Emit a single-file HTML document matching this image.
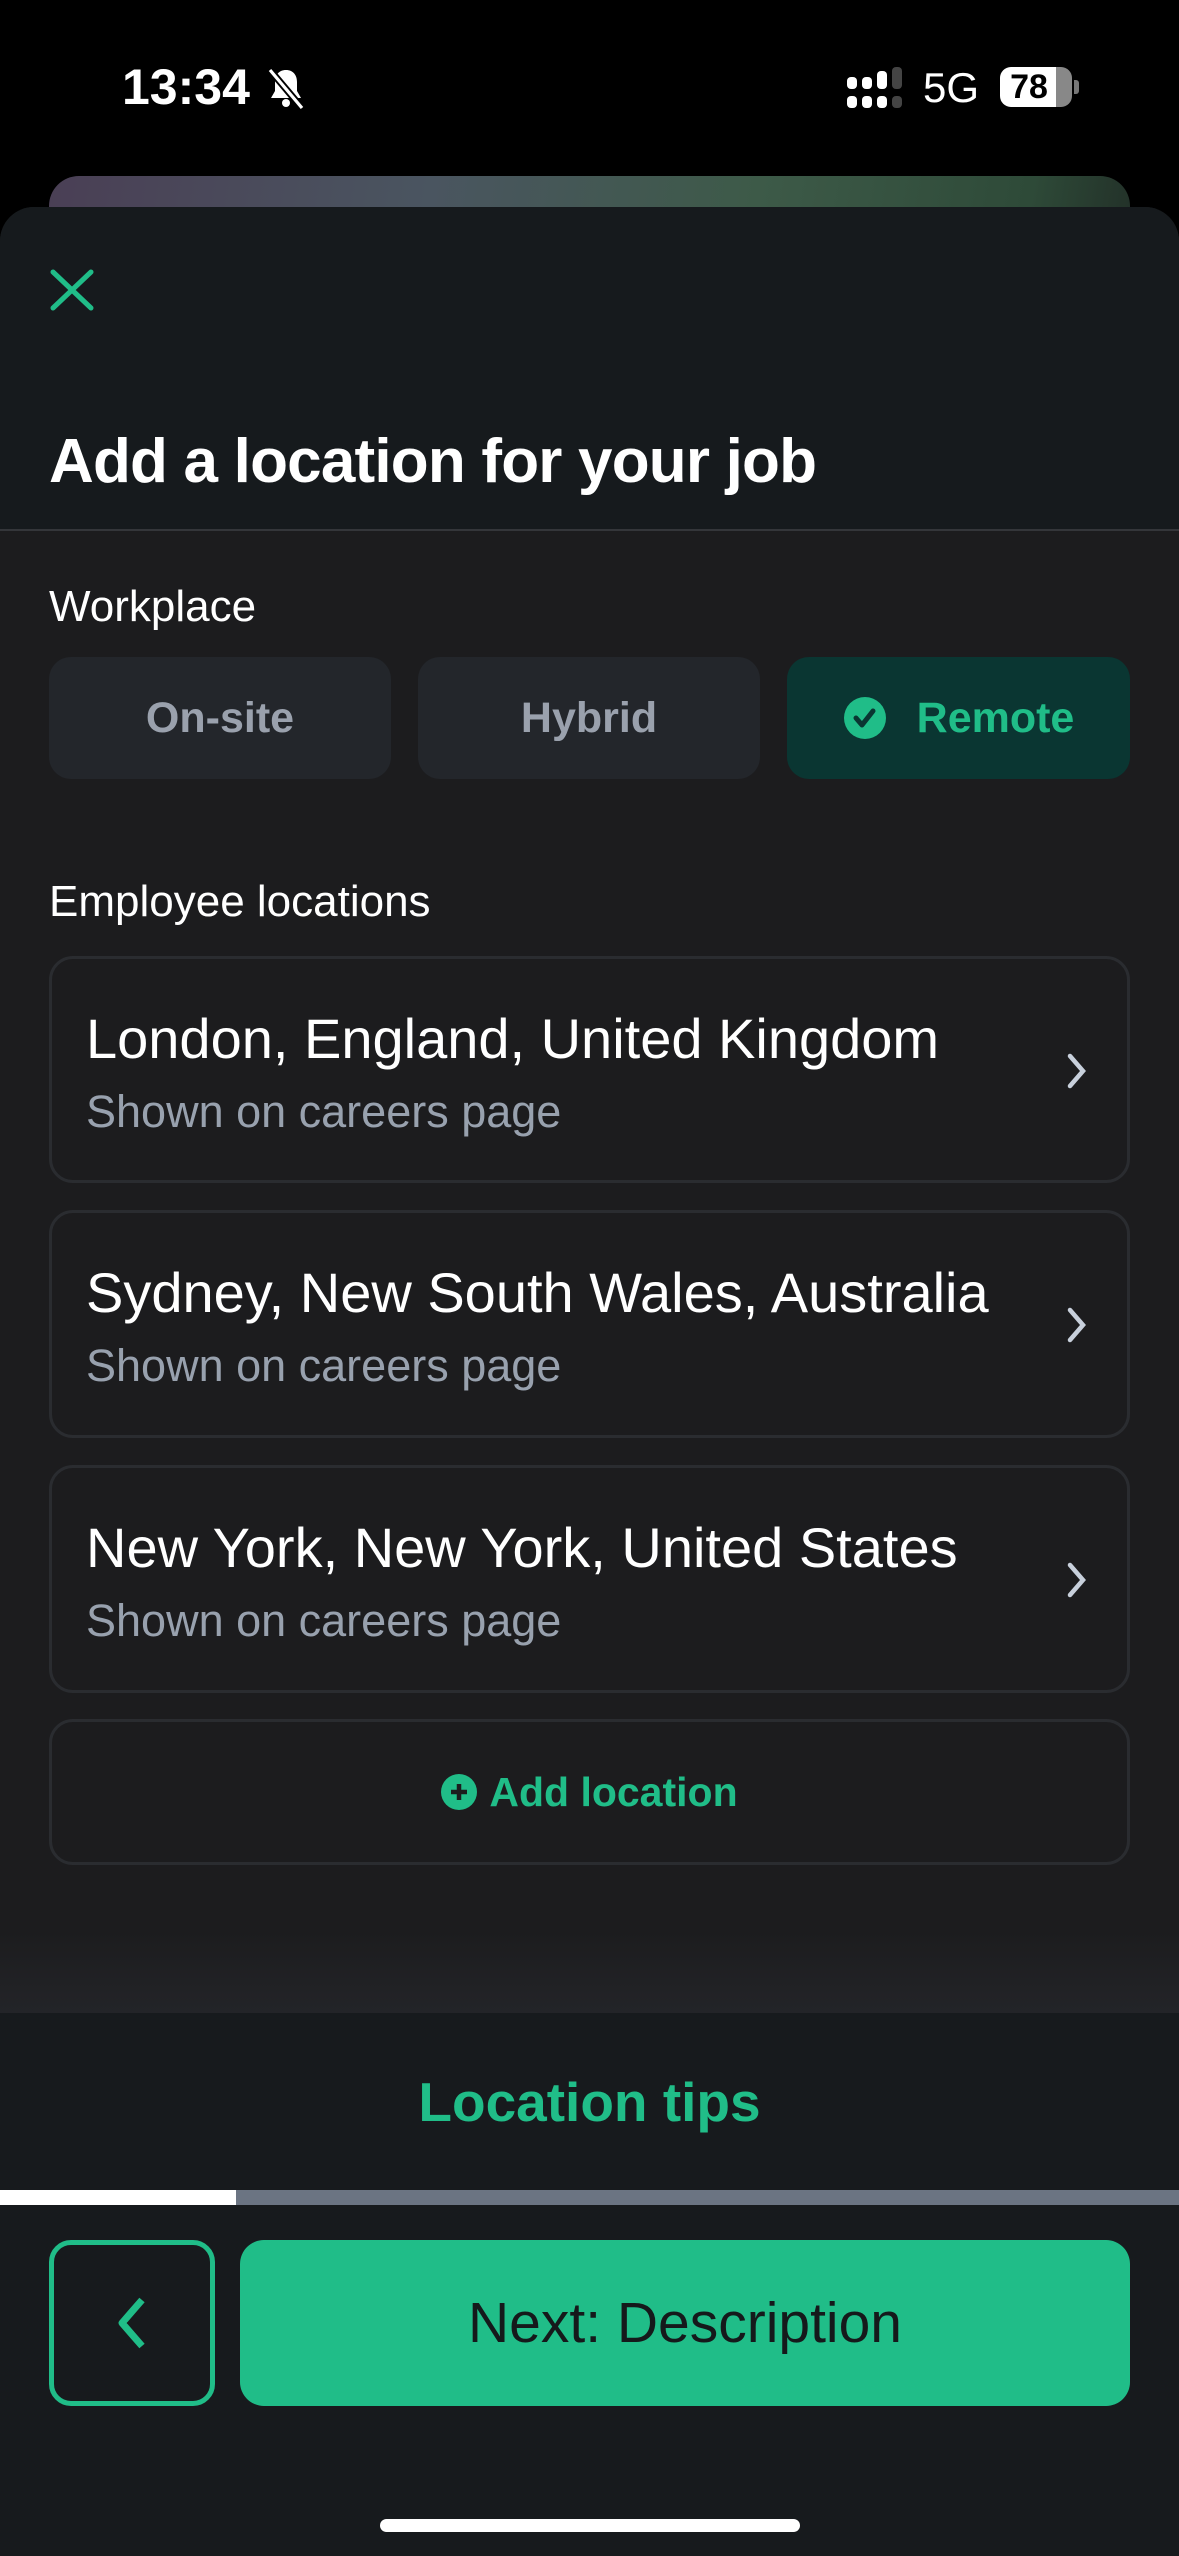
<!DOCTYPE html>
<html><head><meta charset="utf-8"><style>
*{margin:0;padding:0;box-sizing:border-box}
body{width:1179px;height:2556px;background:#000;position:relative;overflow:hidden;font-family:"Liberation Sans",sans-serif;color:#fff}
.abs{position:absolute}
.sheet{position:absolute;left:0;top:207px;width:1179px;height:2349px;background:#1c1c1e;border-radius:34px 34px 0 0;overflow:hidden}
.btn{position:absolute;top:657px;height:122px;width:342px;border-radius:22px;background:#23262b;color:#9aa1ad;font-size:43px;font-weight:bold;display:flex;align-items:center;justify-content:center}
.card{position:absolute;left:49px;width:1081px;border:3px solid #2a2c30;border-radius:24px;background:#1c1c1e}
.ct{position:absolute;left:34px;top:47px;font-size:56px;white-space:nowrap}
.cs{position:absolute;left:34px;top:127px;font-size:45px;color:#98a1ae;white-space:nowrap}
.chev{position:absolute;right:38px;top:92px}
</style></head><body>
<div class="abs" style="left:122px;top:58px;font-size:50px;font-weight:bold">13:34</div>
<svg class="abs" style="left:262px;top:64px" width="48" height="48" viewBox="0 0 24 24"><path d="M12 3c-3.5 0-5.5 2.5-5.5 6v4.5L4.5 17h15l-2-3.5V9c0-3.5-2-6-5.5-6z" fill="#fff"/><circle cx="12" cy="19.5" r="2" fill="#fff"/><path d="M4 3l16 19" stroke="#000" stroke-width="3.5"/><path d="M4 3l16 19" stroke="#fff" stroke-width="1.6"/></svg>
<svg class="abs" style="left:847px;top:67px" width="58" height="42" viewBox="0 0 58 42">
<rect x="0" y="10" width="10" height="12" rx="4" fill="#fff"/><rect x="0" y="29" width="10" height="12" rx="4" fill="#fff"/>
<rect x="15" y="10" width="10" height="12" rx="4" fill="#fff"/><rect x="15" y="29" width="10" height="12" rx="4" fill="#fff"/>
<rect x="30" y="4" width="10" height="18" rx="4" fill="#fff"/><rect x="30" y="29" width="10" height="12" rx="4" fill="#fff"/>
<rect x="45" y="0" width="10" height="22" rx="4" fill="#444"/><rect x="45" y="29" width="10" height="12" rx="4" fill="#444"/></svg>
<div class="abs" style="left:923px;top:64px;font-size:42px">5G</div>
<div class="abs" style="left:1000px;top:67px;width:72px;height:40px;border-radius:11px;background:linear-gradient(90deg,#fff 78%,#888 78%);color:#000;font-size:34px;font-weight:bold;text-align:center;line-height:40px;padding-right:14px">78</div>
<div class="abs" style="left:1074px;top:80px;width:5px;height:14px;border-radius:0 3px 3px 0;background:#777"></div>
<div class="abs" style="left:49px;top:176px;width:1081px;height:80px;border-radius:30px 30px 0 0;background:linear-gradient(100deg,#4a3f55 0%,#4a5560 35%,#3d5a48 65%,#2e4a38 90%,#223028 100%)"></div>
<div class="sheet">
 <div class="abs" style="left:0;top:0;width:1179px;height:324px;background:#161a1d;border-bottom:2px solid #34363a"></div>
 <svg class="abs" style="left:49px;top:62px" width="46" height="42" viewBox="0 0 46 42"><path d="M4 3L42 39M42 3L4 39" stroke="#20bd88" stroke-width="5" stroke-linecap="round"/></svg>
 <div class="abs" style="left:49px;top:219px;font-size:62px;font-weight:bold;letter-spacing:-0.8px">Add a location for your job</div>
 <div class="abs" style="left:49px;top:375px;font-size:44px">Workplace</div>
</div>
<div class="btn" style="left:49px">On-site</div>
<div class="btn" style="left:418px">Hybrid</div>
<div class="btn" style="left:787px;width:343px;background:#0a3632;color:#20bd88"><svg width="44" height="44" viewBox="0 0 44 44" style="margin-right:30px"><circle cx="22" cy="22" r="21" fill="#20bd88"/><path d="M13 22l6 7 11-14" stroke="#0a3632" stroke-width="5" fill="none" stroke-linecap="round" stroke-linejoin="round"/></svg>Remote</div>
<div class="abs" style="left:49px;top:877px;font-size:44px">Employee locations</div>
<div class="card" style="top:956px;height:227px"><div class="ct">London, England, United Kingdom</div><div class="cs">Shown on careers page</div><svg class="chev" width="24" height="40" viewBox="0 0 24 40"><path d="M5 5l13 15L5 35" stroke="#c8d0dc" stroke-width="4.5" fill="none" stroke-linecap="round"/></svg></div>
<div class="card" style="top:1210px;height:228px"><div class="ct">Sydney, New South Wales, Australia</div><div class="cs">Shown on careers page</div><svg class="chev" width="24" height="40" viewBox="0 0 24 40"><path d="M5 5l13 15L5 35" stroke="#c8d0dc" stroke-width="4.5" fill="none" stroke-linecap="round"/></svg></div>
<div class="card" style="top:1465px;height:228px"><div class="ct">New York, New York, United States</div><div class="cs">Shown on careers page</div><svg class="chev" width="24" height="40" viewBox="0 0 24 40"><path d="M5 5l13 15L5 35" stroke="#c8d0dc" stroke-width="4.5" fill="none" stroke-linecap="round"/></svg></div>
<div class="card" style="top:1719px;height:146px;display:flex;align-items:center;justify-content:center;color:#20bd88;font-size:41px;font-weight:bold"><svg width="36" height="36" viewBox="0 0 36 36" style="margin-right:12px"><circle cx="18" cy="18" r="18" fill="#20bd88"/><path d="M18 10v16M10 18h16" stroke="#1c1c1e" stroke-width="4.5"/></svg>Add location</div>
<div class="abs" style="left:0;top:1930px;width:1179px;height:83px;background:linear-gradient(#1c1c1e,#232428)"></div>
<div class="abs" style="left:0;top:2013px;width:1179px;height:543px;background:#171a1d"></div>
<div class="abs" style="left:0;top:2070px;width:1179px;text-align:center;font-size:55px;font-weight:bold;color:#20bd88">Location tips</div>
<div class="abs" style="left:0;top:2190px;width:1179px;height:15px;background:#6b7482"></div>
<div class="abs" style="left:0;top:2190px;width:236px;height:15px;background:#fff"></div>
<div class="abs" style="left:49px;top:2240px;width:166px;height:166px;border:5px solid #20bd88;border-radius:22px"></div>
<svg class="abs" style="left:114px;top:2294px" width="36" height="58" viewBox="0 0 36 58"><path d="M28 6L8 29l20 23" stroke="#20bd88" stroke-width="7" fill="none" stroke-linejoin="round"/></svg>
<div class="abs" style="left:240px;top:2240px;width:890px;height:166px;border-radius:24px;background:#20bd88;color:#15191b;font-size:57px;display:flex;align-items:center;justify-content:center">Next: Description</div>
<div class="abs" style="left:380px;top:2519px;width:420px;height:13px;border-radius:7px;background:#fff"></div>
</body></html>
